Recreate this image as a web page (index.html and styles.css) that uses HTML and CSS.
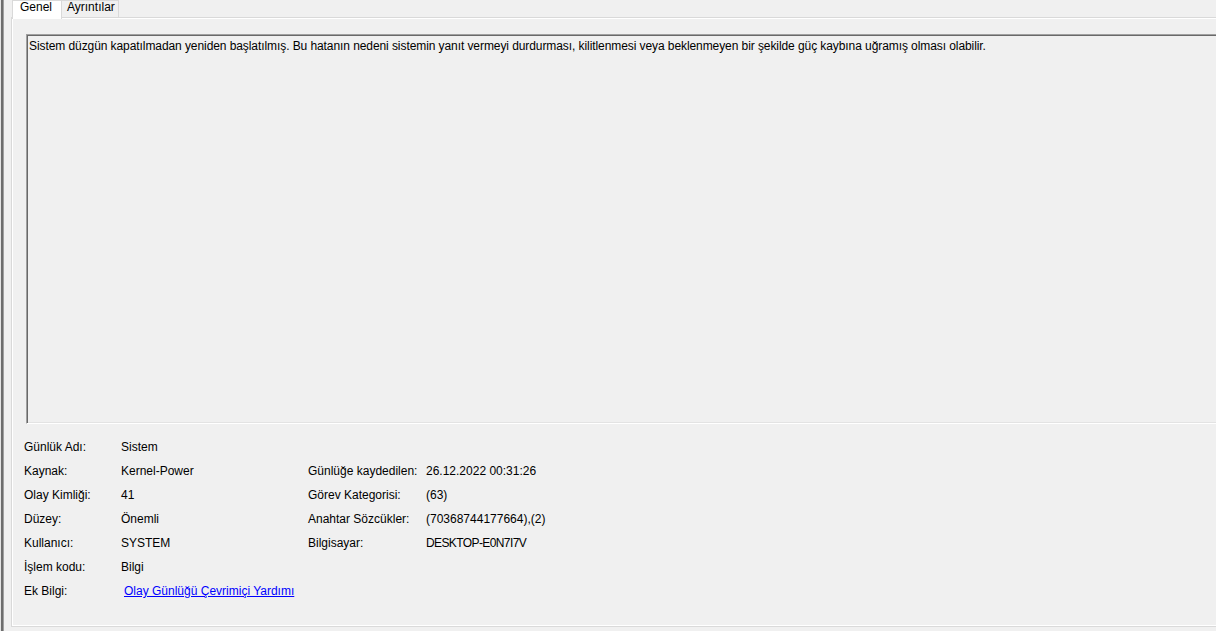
FILE: index.html
```html
<!DOCTYPE html>
<html lang="tr">
<head>
<meta charset="utf-8">
<title>Olay Özellikleri</title>
<link rel="stylesheet" href="styles.css">
</head>
<body>
<div class="window">
  <div class="edge"></div>
  <div class="tabctl">
    <div class="tabstrip">
      <div class="tab tab-active">Genel</div>
      <div class="tab">Ayrıntılar</div>
    </div>
    <div class="panel">
      <div class="panel-inner">
        <div class="textbox">Sistem düzgün kapatılmadan yeniden başlatılmış. Bu hatanın nedeni sistemin yanıt vermeyi durdurması, kilitlenmesi veya beklenmeyen bir şekilde güç kaybına uğramış olması olabilir.</div>
        <div class="details">
          <div class="lbl">Günlük Adı:</div><div class="val">Sistem</div><div class="lbl"></div><div class="val"></div>
          <div class="lbl">Kaynak:</div><div class="val">Kernel-Power</div><div class="lbl">Günlüğe kaydedilen:</div><div class="val">26.12.2022 00:31:26</div>
          <div class="lbl">Olay Kimliği:</div><div class="val">41</div><div class="lbl">Görev Kategorisi:</div><div class="val">(63)</div>
          <div class="lbl">Düzey:</div><div class="val">Önemli</div><div class="lbl">Anahtar Sözcükler:</div><div class="val">(70368744177664),(2)</div>
          <div class="lbl">Kullanıcı:</div><div class="val">SYSTEM</div><div class="lbl">Bilgisayar:</div><div class="val val-caps">DESKTOP-E0N7I7V</div>
          <div class="lbl">İşlem kodu:</div><div class="val">Bilgi</div><div class="lbl"></div><div class="val"></div>
          <div class="lbl">Ek Bilgi:</div><div class="val"><a class="link" href="#">Olay Günlüğü Çevrimiçi Yardımı</a></div><div class="lbl"></div><div class="val"></div>
        </div>
      </div>
    </div>
  </div>
</div>
</body>
</html>
```

FILE: styles.css
```css
* { box-sizing: border-box; }
html, body {
  margin: 0;
  padding: 0;
  width: 1216px;
  height: 631px;
  overflow: hidden;
  background: #f0f0f0;
  font-family: "Liberation Sans", Arial, sans-serif;
  font-size: 12px;
  color: #000;
}
.window {
  display: flex;
  height: 631px;
}
.edge {
  width: 4px;
  flex: none;
  border-left: 1px solid #e3e3e3;
  background: #6d6d6d;
  border-right: 1px solid #a0a0a0;
}
.tabctl {
  margin-left: 7px;
  flex: 1;
  display: flex;
  flex-direction: column;
  margin-right: -40px;
  padding-bottom: 4px;
  background: #f0f0f0;
}
.tabstrip {
  display: flex;
  height: 17px;
  padding-left: 1px;
  position: relative;
  z-index: 1;
}
.tab {
  height: 17px;
  padding: 0 4px 0 5px;
  line-height: 13px;
  border: 1px solid #d9d9d9;
  border-bottom: none;
  border-left: none;
  background: #f0f0f0;
  width: 57px;
}
.tab-active {
  background: #ffffff;
  height: 19px;
  width: 50px;
  padding-left: 7px;
  line-height: 12px;
  border-left: 1px solid #d9d9d9;
  border-right: 1px solid #d9d9d9;
  margin-bottom: -2px;
}
.panel {
  flex: 1;
  border-top: 1px solid #d9d9d9;
  border-left: 1px solid #d9d9d9;
  border-bottom: 1px solid #dadada;
}
.panel-inner {
  height: 100%;
  border-top: 1px solid #ffffff;
  border-left: 1px solid #ffffff;
  border-bottom: 1px solid #ffffff;
  padding: 15px 0 0 13px;
  background: #f0f0f0;
}
.textbox {
  height: 390px;
  border-top: 1px solid #a0a0a0;
  border-left: 1px solid #a0a0a0;
  border-bottom: 1px solid #ffffff;
  box-shadow: inset 1px 1px 0 #696969, inset 0 -1px 0 #e3e3e3;
  padding: 4px 0 0 2px;
  line-height: 15px;
  background: #f0f0f0;
  white-space: nowrap;
  letter-spacing: -0.08px;
}
.details {
  display: grid;
  grid-template-columns: 97px 187px 118px 1fr;
  grid-auto-rows: 24px;
  margin-top: 11px;
  margin-left: -2px;
}
.lbl, .val {
  line-height: 24px;
  white-space: nowrap;
}
.val-caps {
  letter-spacing: -0.6px;
}
.link {
  color: #0000ff;
  text-decoration: underline;
  margin-left: 3px;
}
```
